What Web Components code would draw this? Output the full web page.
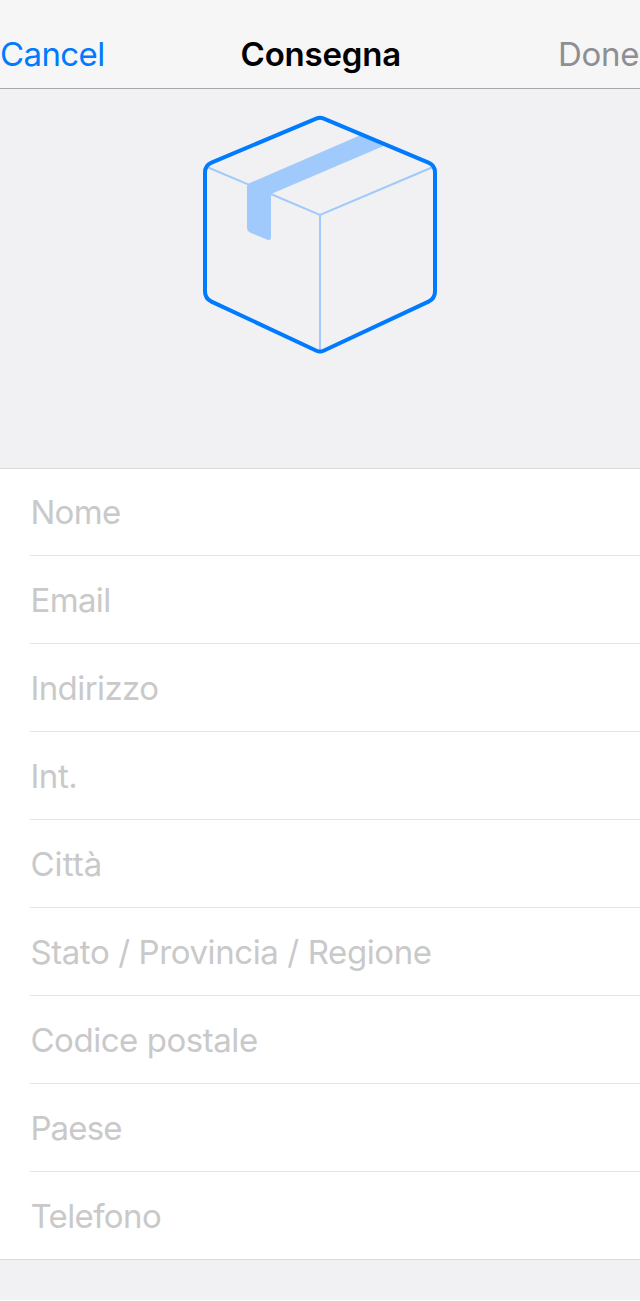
<!DOCTYPE html>
<html lang="it">
<head>
<meta charset="utf-8">
<title>Consegna</title>
<style>
html{background:#fff}
body{margin:0;font-family:Inter,"Liberation Sans",sans-serif;font-size:33px}
</style>
</head>
<body>
<delivery-screen></delivery-screen>
<script>
class BaseElement extends HTMLElement {
  constructor() {
    super();
    this.attachShadow({ mode: 'open' }).innerHTML = this.constructor.markup;
  }
}

class NavBar extends BaseElement {
  static markup = `<style>
    :host{display:grid;grid-template-columns:1fr auto 1fr;align-items:center;box-sizing:border-box;height:89px;padding-top:20px;background:#f6f6f6;border-bottom:1px solid #a7a7aa;line-height:40px;white-space:nowrap}
    .start{color:#007aff;letter-spacing:-.6px}
    .title{color:#000;font-weight:600;letter-spacing:-.2px;padding-left:1.500px}
    .end{color:#8e8e93;justify-self:end;letter-spacing:-.3px;padding-right:.8px}
  </style><div class="start"><slot name="start"></slot></div><div class="title"><slot></slot></div><div class="end"><slot name="end"></slot></div>`;
}
customElements.define('nav-bar', NavBar);

class PackageIcon extends BaseElement {
  static markup = `<style>
    :host{display:block;width:240px;height:244px}
    svg{display:block}
  </style><svg width="240" height="244" viewBox="200 113 240 244" fill="none" aria-hidden="true">
    <path d="M207 167 320 214.8 433 167M320 214.8V351" stroke="#9fcafb" stroke-width="2"/>
    <path d="M247 187Q247 184 250.500 182.700L362 134.500 386 145 271 194V237.500Q271 241 267.500 239.800L250.500 232.800Q247 231.200 247 227.500Z" fill="#9fcafb"/>
    <path d="M316.800 118.300Q320 117 323.200 118.300L428.500 162.600Q435 165.300 435 172.500V291.500Q435 298.600 428.500 301.600L323.500 350.700Q320 352.300 316.500 350.700L211.500 301.600Q205 298.600 205 291.500V172.500Q205 165.300 211.500 162.600Z" stroke="#007aff" stroke-width="4"/>
  </svg>`;
}
customElements.define('package-icon', PackageIcon);

class FormField extends BaseElement {
  static markup = `<style>
    :host{display:block;padding-left:30px}
    div{box-sizing:border-box;height:88px;padding:1px 0 0 .4px;border-bottom:1px solid #e4e4e6;line-height:86px;color:#c9c9ca;white-space:nowrap}
    :host([last]) div{border-color:transparent}
  </style><div><slot></slot></div>`;
}
customElements.define('form-field', FormField);

class FieldGroup extends BaseElement {
  static markup = `<style>
    :host{display:block;background:#fff;box-shadow:inset 0 1px #d9d9dc,inset 0 -1px #d9d9dc}
  </style><slot></slot>`;
}
customElements.define('field-group', FieldGroup);

class DeliveryScreen extends BaseElement {
  static markup = `<style>
    :host{display:flex;flex-direction:column;height:1300px;overflow:hidden;background:#f1f1f4}
    header{display:flex;justify-content:center;box-sizing:border-box;height:379px;padding-top:24px}
  </style>
  <nav-bar><span slot="start">Cancel</span>Consegna<span slot="end">Done</span></nav-bar>
  <header><package-icon></package-icon></header>
  <field-group>
    <form-field style="letter-spacing:-.65px">Nome</form-field>
    <form-field style="letter-spacing:-.6px">Email</form-field>
    <form-field style="letter-spacing:-.58px">Indirizzo</form-field>
    <form-field style="letter-spacing:-.4px">Int.</form-field>
    <form-field style="letter-spacing:.1px">Città</form-field>
    <form-field style="letter-spacing:-.4px">Stato / Provincia / Regione</form-field>
    <form-field style="letter-spacing:-.45px">Codice postale</form-field>
    <form-field style="letter-spacing:-.85px">Paese</form-field>
    <form-field style="letter-spacing:-.6px" last>Telefono</form-field>
  </field-group>`;
}
customElements.define('delivery-screen', DeliveryScreen);
</script>
</body>
</html>
